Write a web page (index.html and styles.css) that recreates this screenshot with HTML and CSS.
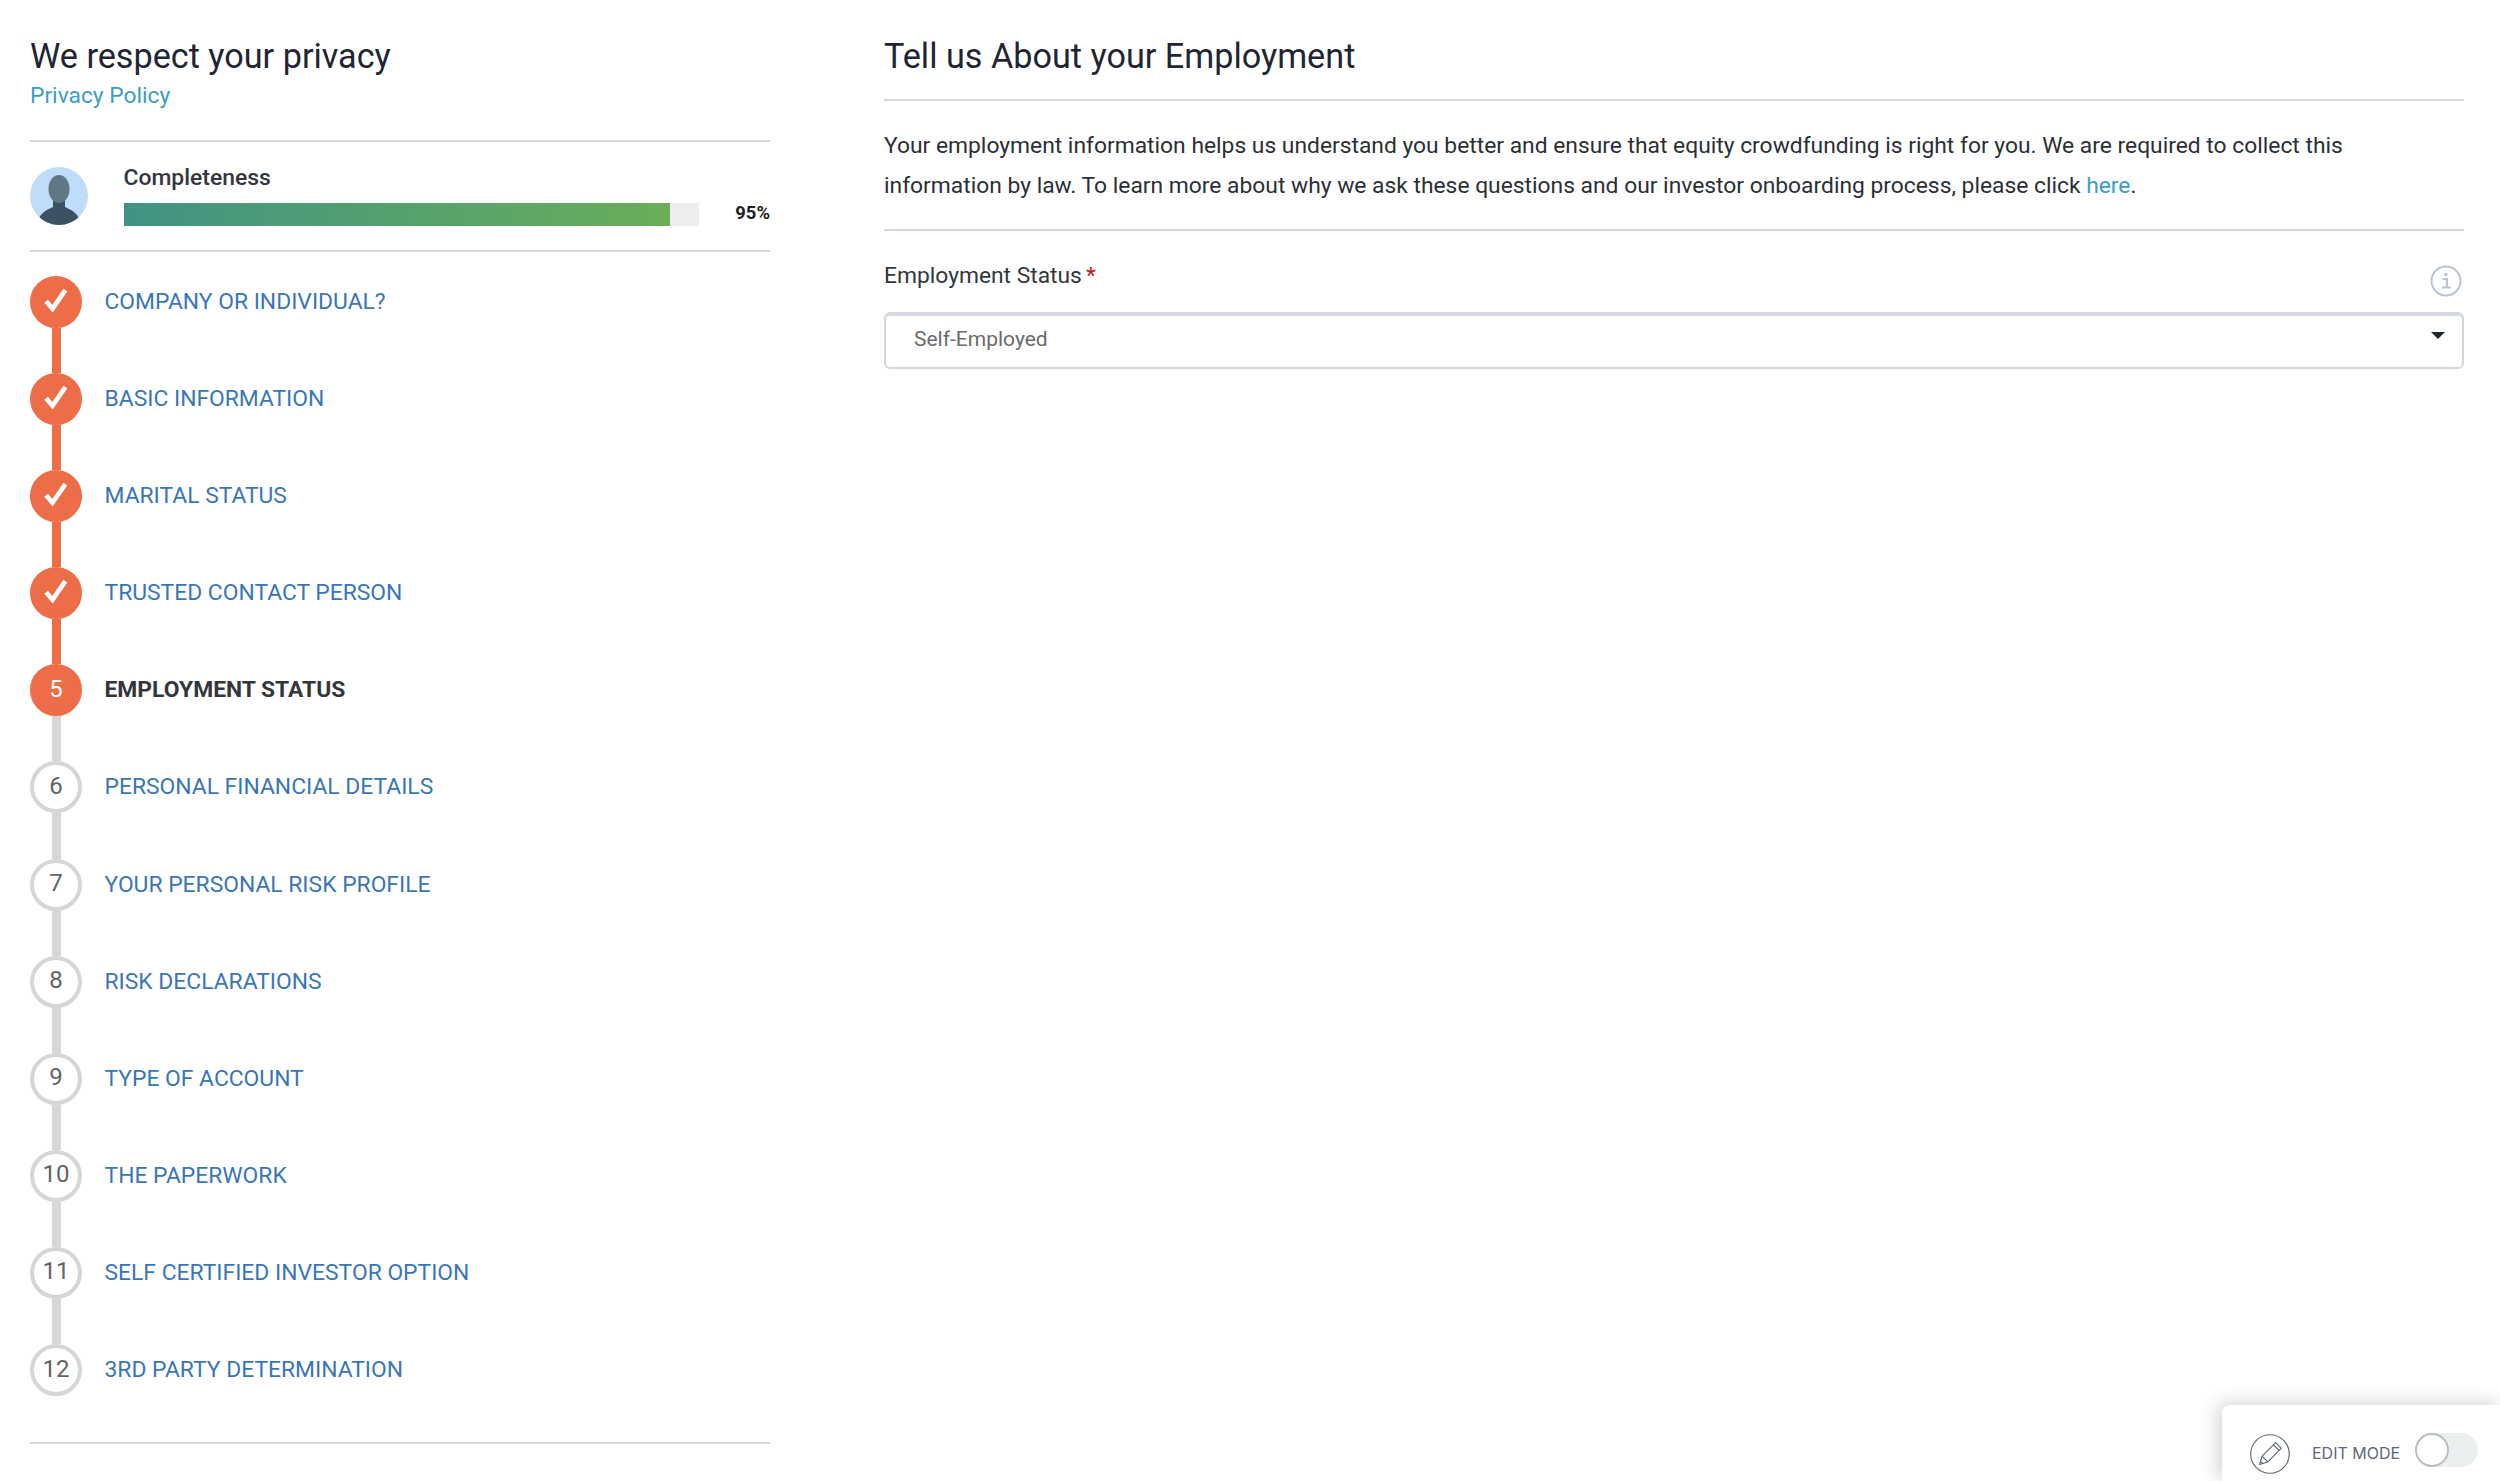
FILE: index.html
```html
<!DOCTYPE html>
<html lang="en">
<head>
<meta charset="utf-8">
<title>Employment Status</title>
<link rel="stylesheet" href="styles.css">
</head>
<body>
<div class="page">
  <aside class="sidebar">
    <h2 class="title">We respect your privacy</h2>
    <a class="policy" href="#">Privacy Policy</a>
    <div class="complete">
      <svg class="avatar" viewBox="0 0 58 58" aria-hidden="true">
        <defs><clipPath id="av"><circle cx="29" cy="29" r="29"/></clipPath></defs>
        <circle cx="29" cy="29" r="29" fill="#bfdcf9"/>
        <g clip-path="url(#av)">
          <path d="M8 58c0-12 9-15 15-18v-8h12v8c6 3 15 6 15 18z" fill="#3a5261"/>
          <ellipse cx="29" cy="22" rx="10.5" ry="14" fill="#5f7883"/>
        </g>
      </svg>
      <div class="meter">
        <div class="meter-label">Completeness</div>
        <div class="meter-row">
          <div class="track"><div class="fill" style="width:95%"></div></div>
          <span class="pct">95%</span>
        </div>
      </div>
    </div>
    <ol class="steps">
      <li class="step done"><span class="marker"><span class="dot"><svg class="check" viewBox="0 0 24 24"><path d="M3.500 13l5.500 6.500L20 3.500" fill="none" stroke="#fff" stroke-width="4"/></svg></span><i class="line"></i></span><a href="#">COMPANY OR INDIVIDUAL?</a></li>
      <li class="step done"><span class="marker"><span class="dot"><svg class="check" viewBox="0 0 24 24"><path d="M3.500 13l5.500 6.500L20 3.500" fill="none" stroke="#fff" stroke-width="4"/></svg></span><i class="line"></i></span><a href="#">BASIC INFORMATION</a></li>
      <li class="step done"><span class="marker"><span class="dot"><svg class="check" viewBox="0 0 24 24"><path d="M3.500 13l5.500 6.500L20 3.500" fill="none" stroke="#fff" stroke-width="4"/></svg></span><i class="line"></i></span><a href="#">MARITAL STATUS</a></li>
      <li class="step done"><span class="marker"><span class="dot"><svg class="check" viewBox="0 0 24 24"><path d="M3.500 13l5.500 6.500L20 3.500" fill="none" stroke="#fff" stroke-width="4"/></svg></span><i class="line"></i></span><a href="#">TRUSTED CONTACT PERSON</a></li>
      <li class="step current"><span class="marker"><span class="dot">5</span><i class="line"></i></span><a href="#">EMPLOYMENT STATUS</a></li>
      <li class="step"><span class="marker"><span class="dot">6</span><i class="line"></i></span><a href="#">PERSONAL FINANCIAL DETAILS</a></li>
      <li class="step"><span class="marker"><span class="dot">7</span><i class="line"></i></span><a href="#">YOUR PERSONAL RISK PROFILE</a></li>
      <li class="step"><span class="marker"><span class="dot">8</span><i class="line"></i></span><a href="#">RISK DECLARATIONS</a></li>
      <li class="step"><span class="marker"><span class="dot">9</span><i class="line"></i></span><a href="#">TYPE OF ACCOUNT</a></li>
      <li class="step"><span class="marker"><span class="dot">10</span><i class="line"></i></span><a href="#">THE PAPERWORK</a></li>
      <li class="step"><span class="marker"><span class="dot">11</span><i class="line"></i></span><a href="#">SELF CERTIFIED INVESTOR OPTION</a></li>
      <li class="step last"><span class="marker"><span class="dot">12</span></span><a href="#">3RD PARTY DETERMINATION</a></li>
    </ol>
  </aside>
  <main class="content">
    <h2 class="title content-title">Tell us About your Employment</h2>
    <p class="intro">Your employment information helps us understand you better and ensure that equity crowdfunding is right for you. We are required to collect this information by law. To learn more about why we ask these questions and our investor onboarding process, please click <a href="#">here</a>.</p>
    <div class="field-head">
      <label class="field-label">Employment Status<span class="req">*</span></label>
      <svg class="info" viewBox="0 0 32 32" aria-hidden="true">
        <circle cx="16" cy="16" r="14.500" fill="none" stroke="#bcc3d2" stroke-width="2"/>
        <circle cx="16" cy="9.500" r="1.700" fill="#bcc3d2"/>
        <path d="M12.500 14h4.500v8M12 22.500h9" fill="none" stroke="#bcc3d2" stroke-width="2.200"/>
      </svg>
    </div>
    <div class="select"><span>Self-Employed</span><i class="caret"></i></div>
  </main>
</div>
<div class="edit-panel">
  <svg class="pencil" viewBox="0 0 40 40" aria-hidden="true">
    <circle cx="20" cy="20" r="19.300" fill="none" stroke="#5d6577" stroke-width="1.100"/>
    <path d="M9.500 30.500l2.600-8.300L25.600 8.700l5.700 5.700-13.500 13.500zM12.100 22.200l5.700 5.700M23.500 10.800l5.700 5.700M10.500 27.300l2.200 2.200" fill="none" stroke="#5d6577" stroke-width="1.100" stroke-linejoin="round"/>
  </svg>
  <span class="edit-text">EDIT MODE</span>
  <span class="toggle"><i class="knob"></i></span>
</div>
</body>
</html>
```
FILE: styles.css
```css
* { box-sizing: border-box; }
html, body { margin: 0; height: 1481px; overflow: hidden; background: #fff; }
body { font-family: Roboto, "Liberation Sans", sans-serif; color: #1f2533; position: relative; }
a { text-decoration: none; }

.page { display: flex; padding: 0 36px 0 30px; gap: 114px; }

.sidebar { width: 740px; flex: none; padding-top: 34px; }
.title { margin: 0; font-size: 34.200px; font-weight: 400; line-height: 44px; color: #1f2533; }
.policy { display: block; margin-top: 3px; font-size: 22.800px; line-height: 30px; color: #3c9dc4; }

.complete {
  display: flex; align-items: center; gap: 36px;
  margin-top: 29px; height: 112px;
  border-top: 2px solid #d3d7e2; border-bottom: 2px solid #d3d7e2;
}
.avatar { width: 58px; height: 58px; flex: none; }
.meter { flex: 1; margin-left: -0.500px; }
.meter-label { font-size: 22.900px; font-weight: 500; line-height: 28px; color: #33373d; margin-top: -2px; }
.meter-row { display: flex; align-items: center; justify-content: space-between; margin-top: 11px; }
.track { width: 575px; height: 23px; background: #eeeeee; }
.fill { height: 100%; background: linear-gradient(90deg, #409384, #6aae59); }
.pct { font-size: 18.400px; font-weight: 700; color: #1f2225; margin-top: -4px; }

.steps { list-style: none; margin: 24px 0 0; padding: 0; border-bottom: 2px solid #d3d7e2; padding-bottom: 46px; }
.step { display: flex; align-items: flex-start; gap: 22.500px; height: 97.100px; }
.step.last { height: 52px; }
.marker { display: flex; flex-direction: column; align-items: center; width: 52px; flex: none; }
.dot {
  display: flex; align-items: center; justify-content: center;
  width: 52px; height: 52px; border-radius: 50%;
  border: 4px solid #d5d6d8; background: #fff;
  font-size: 24px; line-height: 1; color: #636363; padding-bottom: 3px;
}
.line { display: block; width: 9px; height: 45.100px; background: #d5d6d8; }
.step a { font-size: 22.850px; line-height: 52px; color: #3a76b5; }
.done .dot, .current .dot { background: #ee6d49; border-color: #ee6d49; color: #fff; }
.done .line { background: #ee6d49; }
.current a { color: #33373d; font-weight: 700; }
.check { width: 28px; height: 28px; margin: -2px 0 0 -1px; }

.content { flex: 1; min-width: 0; padding-top: 34px; }
.content-title { padding-bottom: 21px; border-bottom: 2px solid #d3d7e2; }
.intro {
  margin: 0; padding: 25px 0 23px; font-size: 22.820px; line-height: 40px;
  color: #2b2f36; border-bottom: 2px solid #d3d7e2;
}
.intro a { color: #3c9dc4; }
.field-head { display: flex; justify-content: space-between; align-items: flex-start; margin-top: 31px; height: 50px; }
.field-label { font-size: 22.800px; line-height: 28px; color: #33373d; }
.req { color: #c8161d; margin-left: 4px; }
.info { width: 32px; height: 32px; margin: 3px 2px 0 0; }
.select {
  display: flex; align-items: center; justify-content: space-between;
  height: 57px; padding: 0 17px 3px 28px;
  border: 2px solid #d3d7e2; border-radius: 6px;
  box-shadow: inset 0 2px 1px #d6d8de;
  font-size: 21px; color: #6b6b6b;
}
.caret {
  width: 0; height: 0; margin-bottom: 7px;
  border-left: 7px solid transparent; border-right: 7px solid transparent; border-top: 7px solid #1f2533;
}

.edit-panel {
  position: absolute; right: 0; bottom: 0; width: 278px; height: 76px;
  display: flex; align-items: flex-start; padding: 29px 0 0 28px;
  background: #fff; border-radius: 8px 0 0 0;
  box-shadow: -4px -2px 18px rgba(40, 50, 70, .22);
}
.pencil { width: 40px; height: 40px; flex: none; }
.edit-text { margin: 8px 0 0 22px; font-family: Inter, Roboto, sans-serif; font-size: 16px; line-height: 22px; color: #5f6779; }
.toggle { position: relative; width: 63px; height: 34px; margin: -1px 0 0 15px; border-radius: 17px; background: #ecefef; }
.knob { position: absolute; left: 0; top: 0; width: 34px; height: 34px; border-radius: 50%; background: #fff; border: 2px solid #b9bec2; }
```
